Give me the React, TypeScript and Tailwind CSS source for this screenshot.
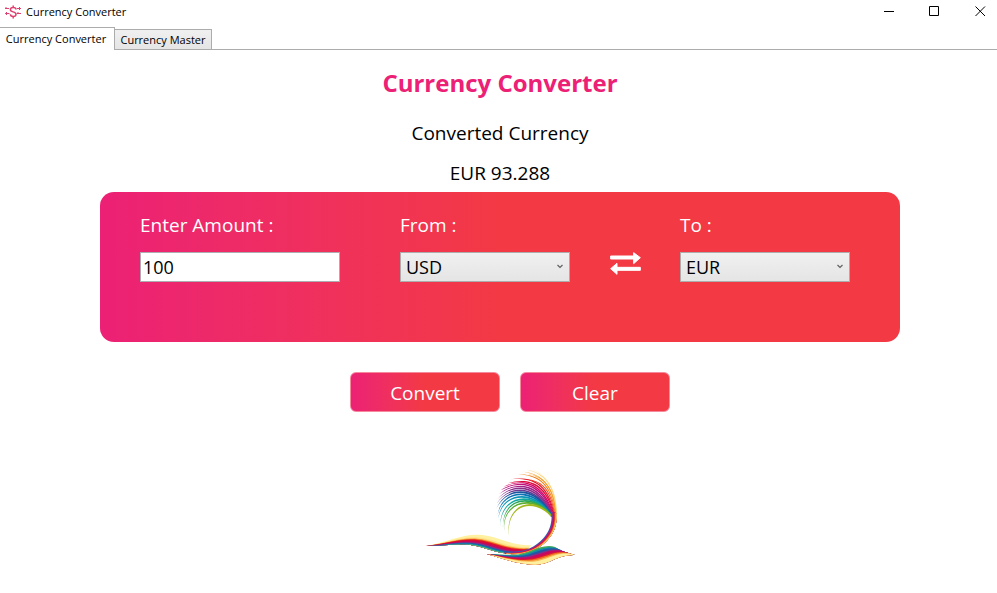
import { useState } from "react";

type Point = [number, number];

const FONT = "font-['Segoe_UI','Open_Sans','Noto_Sans',sans-serif]";

/* Feathers of the plume, innermost first: tip, two control points, root, colour. */
const feathers: [Point, Point, Point, Point, string][] = [
  [[268, 218], [250, 120], [338, 86], [394, 150], "#a3b81c"],
  [[253, 200], [240, 112], [336, 78], [395, 150], "#5aae32"],
  [[249, 188], [244, 98], [338, 74], [395, 151], "#2ea65a"],
  [[241, 186], [236, 92], [338, 66], [396, 151], "#12a6a0"],
  [[235, 162], [240, 82], [342, 62], [396, 152], "#0c93b8"],
  [[233, 148], [246, 70], [344, 58], [397, 152], "#0a72b5"],
  [[229, 132], [256, 62], [348, 54], [398, 153], "#1d559f"],
  [[230, 116], [266, 56], [352, 52], [399, 154], "#6a3c93"],
  [[233, 102], [274, 50], [358, 48], [400, 155], "#8c2f8b"],
  [[237, 88], [284, 46], [364, 46], [401, 156], "#a51f86"],
  [[242, 76], [292, 42], [370, 42], [402, 157], "#c0107c"],
  [[250, 66], [302, 38], [376, 42], [403, 158], "#d5005f"],
  [[260, 56], [316, 38], [384, 42], [404, 159], "#dc0d3c"],
  [[270, 43], [328, 34], [390, 44], [405, 160], "#e3192b"],
  [[300, 43], [348, 40], [396, 50], [406, 161], "#ea4a1e"],
  [[294, 28], [350, 28], [402, 48], [407, 162], "#f07c17"],
  [[311, 20], [360, 26], [408, 54], [408, 163], "#f5981c"],
  [[322, 26], [372, 34], [410, 66], [408, 163], "#f8ac2a"],
  [[320, 14], [376, 22], [414, 68], [409, 164], "#fbc860"],
  [[338, 14], [384, 30], [416, 80], [410, 165], "#fde28c"],
];

function featherPath([tip, a, b, root]: [Point, Point, Point, Point, string]) {
  return `M${tip} C${a} ${b} ${root} L${root[0] - 2},${root[1] + 4} C${b[0] - 2},${b[1] + 8} ${a[0] + 4},${a[1] + 4} ${tip}Z`;
}

/* Each ribbon is bounded by two curves of seven points; bands are painted over each other from the first edge to the second. */
type Ribbon = { from: Point[]; to: Point[]; bands: [number, string][] };

const ribbons: Ribbon[] = [
  {
    from: [[18, 243], [80, 232], [125, 207], [175, 209], [232, 211], [270, 243], [335, 241]],
    to: [[18, 243], [80, 243], [125, 233], [172, 244], [215, 254], [245, 273], [312, 265]],
    bands: [
      [0, "#fff1a0"],
      [0.24, "#fee08a"],
      [0.34, "#f9b04a"],
      [0.4, "#ee6a20"],
      [0.46, "#dc102e"],
      [0.58, "#c9065a"],
      [0.7, "#8d2f83"],
      [0.78, "#205da8"],
      [0.87, "#0f96a6"],
      [0.94, "#b5cc50"],
    ],
  },
  {
    from: [[393, 140], [398, 165], [392, 196], [370, 220], [345, 248], [310, 265], [250, 262]],
    to: [[410, 145], [412, 178], [402, 206], [380, 228], [355, 254], [318, 271], [260, 267]],
    bands: [
      [0, "#276bb0"],
      [0.12, "#82358c"],
      [0.26, "#bd1478"],
      [0.42, "#d80c40"],
      [0.58, "#ed5a1e"],
      [0.72, "#f7a52c"],
      [0.86, "#fde18a"],
    ],
  },
  {
    from: [[200, 267], [245, 266], [285, 276], [325, 260], [365, 242], [400, 234], [420, 256]],
    to: [[200, 267], [250, 280], [290, 298], [345, 299], [390, 299], [412, 268], [464, 270]],
    bands: [
      [0, "#42a85c"],
      [0.1, "#0f8ba8"],
      [0.2, "#2456a3"],
      [0.3, "#83308a"],
      [0.39, "#c7085e"],
      [0.53, "#df1c2e"],
      [0.61, "#ee7222"],
      [0.68, "#f9b552"],
      [0.77, "#fff0a0"],
    ],
  },
];

function bandPath({ from, to }: Ribbon, start: number) {
  const at = (t: number) =>
    from.map((p, i) => [p[0] + (to[i][0] - p[0]) * t, p[1] + (to[i][1] - p[1]) * t].join(","));
  const top = at(start);
  const bottom = at(1).reverse();
  return `M${top[0]} C${top.slice(1, 4).join(" ")} C${top.slice(4).join(" ")} L${bottom[0]} C${bottom.slice(1, 4).join(" ")} C${bottom.slice(4).join(" ")}Z`;
}

function PlumeLogo() {
  return (
    <svg viewBox="0 0 480 315" className="h-[105px] w-[160px]" role="img" aria-label="Logo">
      {[...feathers].reverse().map((f) => (
        <path key={f[4]} d={featherPath(f)} fill={f[4]} />
      ))}
      {ribbons.map((ribbon, r) =>
        ribbon.bands.map(([start, color]) => (
          <path key={`${r}-${color}`} d={bandPath(ribbon, start)} fill={color} />
        )),
      )}
    </svg>
  );
}

function AppIcon() {
  return (
    <svg viewBox="0 0 16 14" className="h-[14px] w-4" fill="none" stroke="#e0406f" strokeWidth="1">
      <path d="M11 4.500C11 3 9.800 2.500 8.200 2.500S5.400 3.200 5.400 4.700C5.400 7.500 11 6.200 11 9.200c0 1.500-1.200 2.300-2.800 2.300S5.400 10.800 5.400 9.300M8.200 0.500v2M8.200 11.500v2" strokeWidth="1.500" />
      <path d="M0 3.500h4M1.500 2L0 3.500M12 3.500h4M14 2l1.500 1.500L14 5M0.500 8.500h4M2 7L0.500 8.500 2 10M12 8.500h4M13.500 7L12 8.500" />
    </svg>
  );
}

function SwapIcon() {
  return (
    <svg
      viewBox="0 0 93 69"
      className="h-[23px] w-[31px]"
      fill="white"
      stroke="white"
      strokeWidth="3"
      strokeLinejoin="round"
    >
      <path d="M2 12H71V2L91 17L71 35V21H2Z" />
      <path d="M91 46H21V34L2 50L21 67V55H91Z" />
    </svg>
  );
}

function TitleBar() {
  const button = "flex h-[23px] w-[46px] items-center justify-center";
  return (
    <header className="flex h-[27px] items-start justify-between">
      <div className="flex h-6 items-center gap-[5px] pl-[5px]">
        <AppIcon />
        <span className="text-[11px] leading-4">Currency Converter</span>
      </div>
      <div className="-mr-1.5 flex overflow-hidden">
        <button type="button" aria-label="Minimize" className={button}>
          <svg viewBox="0 0 11 11" className="size-[11px]" stroke="black"><path d="M1 5.500h10" /></svg>
        </button>
        <button type="button" aria-label="Maximize" className={button}>
          <svg viewBox="0 0 11 11" className="size-[11px]" stroke="black" fill="none"><path d="M.5.5h9v9h-9z" /></svg>
        </button>
        <button type="button" aria-label="Close" className={button}>
          <svg viewBox="0 0 11 11" className="size-[11px]" stroke="black"><path d="M.5.5l9.500 9.500M10 .5L.5 10" /></svg>
        </button>
      </div>
    </header>
  );
}

function Tabs() {
  return (
    <nav role="tablist" className="flex h-[23px] items-end text-[11px] leading-4">
      <button
        type="button"
        role="tab"
        aria-selected="true"
        className="h-[23px] w-[115px] border-t border-r border-[#acacac] bg-white pr-[2px] whitespace-nowrap"
      >
        Currency Converter
      </button>
      <button
        type="button"
        role="tab"
        aria-selected="false"
        className="h-[21px] w-[97px] border-t border-r border-b border-[#acacac] bg-linear-to-b from-[#f0f0f0] to-[#e5e5e5] whitespace-nowrap"
      >
        Currency Master
      </button>
      <div className="h-px flex-1 bg-[#acacac]" />
    </nav>
  );
}

function CurrencySelect({ id, label, initial }: { id: string; label: string; initial: string }) {
  const [value, setValue] = useState(initial);
  return (
    <div className="flex w-[170px] flex-col gap-[14px]">
      <label htmlFor={id} className="leading-[26px] text-white">{label}</label>
      <div className="relative">
        <select
          id={id}
          value={value}
          onChange={(e) => setValue(e.target.value)}
          className="block h-[30px] w-full appearance-none border border-[#acacac] bg-linear-to-b from-[#f0f0f0] to-[#e5e5e5] pl-[5px] text-[18px] leading-7 text-black outline-none"
        >
          <option>USD</option>
          <option>EUR</option>
          <option>INR</option>
          <option>POUND</option>
        </select>
        <svg
          viewBox="0 0 6 5"
          className="pointer-events-none absolute top-3 right-[7px] h-[5px] w-[6px]"
          fill="none"
          stroke="#606060"
          strokeWidth="1.200"
        >
          <path d="M.5 1L3 3.500 5.500 1" />
        </svg>
      </div>
    </div>
  );
}

function ActionButton({ children, onClick }: { children: string; onClick?: () => void }) {
  return (
    <button
      type="button"
      onClick={onClick}
      className="h-10 w-[150px] rounded-md border border-[#f48a9c] bg-linear-to-r from-[#ec2075] to-[#f33944] to-50% bg-origin-border pt-[2px] text-white"
    >
      {children}
    </button>
  );
}

export default function App() {
  const [amount, setAmount] = useState("100");
  return (
    <div className={`flex min-h-screen flex-col bg-white text-black ${FONT}`}>
      <TitleBar />
      <Tabs />
      <main className="flex flex-col items-center pl-[3px] text-[19px]">
        <h1 className="mt-[15px] text-[24px] leading-9 font-bold text-[#ec2075]">Currency Converter</h1>
        <p className="mt-[18px] leading-7">Converted Currency</p>
        <p className="mt-3 leading-7">EUR 93.288</p>
        <section className="mt-[5px] flex h-[150px] w-full max-w-[800px] items-start rounded-[14px] bg-linear-to-r from-[#ec2075] to-[#f33944] to-50% pt-5 pl-10">
          <div className="mr-[60px] flex w-[200px] flex-col gap-[14px]">
            <label htmlFor="amount" className="leading-[26px] text-white">Enter Amount :</label>
            <input
              id="amount"
              value={amount}
              onChange={(e) => setAmount(e.target.value)}
              className="h-[30px] w-full border border-[#abadb3] bg-white pl-[2px] text-[18px] text-black outline-none"
            />
          </div>
          <CurrencySelect id="from" label="From :" initial="USD" />
          <div className="mr-[39px] ml-10 pt-10">
            <SwapIcon />
          </div>
          <CurrencySelect id="to" label="To :" initial="EUR" />
        </section>
        <div className="mt-[30px] flex gap-5 pl-5">
          <ActionButton>Convert</ActionButton>
          <ActionButton onClick={() => setAmount("")}>Clear</ActionButton>
        </div>
        <div className="mt-[53px]">
          <PlumeLogo />
        </div>
      </main>
    </div>
  );
}
